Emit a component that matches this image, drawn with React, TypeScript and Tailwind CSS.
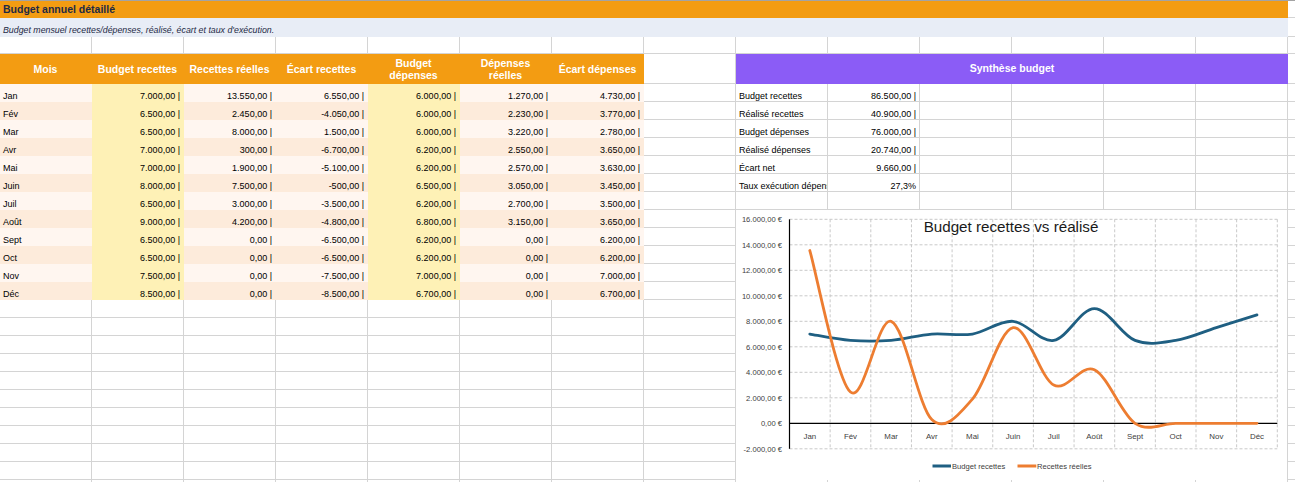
import React from 'react';

type Row = [string, number, number, number, number, number, number];

const rows: Row[] = [
  ['Jan', 7000, 13550, 6550, 6000, 1270, 4730],
  ['Fév', 6500, 2450, -4050, 6000, 2230, 3770],
  ['Mar', 6500, 8000, 1500, 6000, 3220, 2780],
  ['Avr', 7000, 300, -6700, 6200, 2550, 3650],
  ['Mai', 7000, 1900, -5100, 6200, 2570, 3630],
  ['Juin', 8000, 7500, -500, 6500, 3050, 3450],
  ['Juil', 6500, 3000, -3500, 6200, 2700, 3500],
  ['Août', 9000, 4200, -4800, 6800, 3150, 3650],
  ['Sept', 6500, 0, -6500, 6200, 0, 6200],
  ['Oct', 6500, 0, -6500, 6200, 0, 6200],
  ['Nov', 7500, 0, -7500, 7000, 0, 7000],
  ['Déc', 8500, 0, -8500, 6700, 0, 6700],
];

const summary: [string, string][] = [
  ['Budget recettes', '86.500,00 |'],
  ['Réalisé recettes', '40.900,00 |'],
  ['Budget dépenses', '76.000,00 |'],
  ['Réalisé dépenses', '20.740,00 |'],
  ['Écart net', '9.660,00 |'],
  ['Taux exécution dépenses', '27,3%'],
];

function num(n: number) {
  const int = Math.abs(n)
    .toString()
    .replace(/\B(?=(\d{3})+(?!\d))/g, '.');
  return `${n < 0 ? '-' : ''}${int},00`;
}

const line = 'border-[#d4d4d4]';

function Cell({ className = '', children }: { className?: string; children?: React.ReactNode }) {
  return (
    <div className={`w-[92px] shrink-0 h-full border-r border-b flex overflow-hidden whitespace-nowrap ${className}`}>
      {children}
    </div>
  );
}

function EmptyCells({ count }: { count: number }) {
  return (
    <>
      {Array.from({ length: count }).map((_, i) => (
        <Cell key={i} className={line} />
      ))}
    </>
  );
}

function Chart() {
  const L = 53.5;
  const R = 541.3;
  const cw = (R - L) / 12;
  const y = (v: number) => 213.3 - v * 0.01275;
  const cx = (i: number) => L + cw * (i + 0.5);
  const months = rows.map((r) => r[0]);
  const budget = rows.map((r) => r[1]);
  const reel = rows.map((r) => r[2]);

  const smooth = (vals: number[]) => {
    const pts = vals.map((v, i) => [cx(i), y(v)]);
    let d = `M${pts[0][0]},${pts[0][1]}`;
    for (let i = 0; i < pts.length - 1; i++) {
      const p0 = pts[i - 1] || pts[i];
      const p1 = pts[i];
      const p2 = pts[i + 1];
      const p3 = pts[i + 2] || p2;
      const c1x = p1[0] + (p2[0] - p0[0]) / 6;
      const c1y = p1[1] + (p2[1] - p0[1]) / 6;
      const c2x = p2[0] - (p3[0] - p1[0]) / 6;
      const c2y = p2[1] - (p3[1] - p1[1]) / 6;
      d += ` C${c1x},${c1y} ${c2x},${c2y} ${p2[0]},${p2[1]}`;
    }
    return d;
  };

  const ticks = [16000, 14000, 12000, 10000, 8000, 6000, 4000, 2000, 0, -2000];
  const top = y(16000);
  const bottom = y(-2000);

  return (
    <div className="absolute left-[736px] top-[210px] w-[551px] h-[270px] bg-white">
      <svg width="551" height="270" className="block font-['Liberation_Sans',Arial,sans-serif]">
        {ticks
          .filter((t) => t !== 0)
          .map((t) => (
            <line key={t} x1={L} x2={R} y1={y(t)} y2={y(t)} stroke="#c9c9c9" strokeDasharray="3 2" />
          ))}
        {Array.from({ length: 12 }).map((_, k) => (
          <line
            key={k}
            x1={L + cw * (k + 1)}
            x2={L + cw * (k + 1)}
            y1={top}
            y2={bottom}
            stroke="#c9c9c9"
            strokeDasharray="3 2"
          />
        ))}
        <line x1={L} x2={L} y1={top} y2={bottom} stroke="#000" strokeWidth="1.2" />
        <line x1={L} x2={R} y1={y(0)} y2={y(0)} stroke="#000" strokeWidth="1.2" />
        {ticks.map((t) => (
          <text key={t} x={46} y={y(t) + 2.7} textAnchor="end" fontSize="7.6" fill="#404040">
            {`${num(t)} €`}
          </text>
        ))}
        {months.map((m, i) => (
          <text key={m} x={cx(i)} y={228.5} textAnchor="middle" fontSize="7.9" fill="#404040">
            {m}
          </text>
        ))}
        <text x={275} y={22} textAnchor="middle" fontSize="15.2" fill="#1a1a1a">
          Budget recettes vs réalisé
        </text>
        <path d={smooth(budget)} fill="none" stroke="#1f5f82" strokeWidth="2.8" strokeLinecap="round" />
        <path d={smooth(reel)} fill="none" stroke="#ed7d31" strokeWidth="2.8" strokeLinecap="round" />
        <line x1={196.5} x2={215} y1={256} y2={256} stroke="#1f5f82" strokeWidth="3" />
        <text x={216} y={258.7} fontSize="7.6" fill="#404040">
          Budget recettes
        </text>
        <line x1={281.5} x2={300.3} y1={256} y2={256} stroke="#ed7d31" strokeWidth="3" />
        <text x={301} y={258.7} fontSize="7.6" fill="#404040">
          Recettes réelles
        </text>
      </svg>
    </div>
  );
}

export default function App() {
  const headers = ['Mois', 'Budget recettes', 'Recettes réelles', 'Écart recettes', 'Budget dépenses', 'Dépenses réelles', 'Écart dépenses'];
  const twoLine: Record<number, [string, string]> = { 4: ['Budget', 'dépenses'], 5: ['Dépenses', 'réelles'] };

  return (
    <div className="relative w-[1295px] h-[482px] overflow-hidden bg-white text-black font-['Liberation_Sans',Arial,sans-serif] text-[9px]">
      <div className="h-px bg-[#a3a3a3]" />

      <div className="flex h-[17px]">
        <div className="w-[1288px] shrink-0 bg-[#f39c12] flex items-center pl-[3px] text-[10.5px] font-bold text-[#1e2a45]">
          Budget annuel détaillé
        </div>
        <EmptyCells count={1} />
      </div>

      <div className="flex h-[19px]">
        <div className="w-[1288px] shrink-0 bg-[#e8edf6] flex items-end pb-[2px] pl-[3px] italic text-[8.8px] leading-none text-[#1e2a45]">
          Budget mensuel recettes/dépenses, réalisé, écart et taux d'exécution.
        </div>
        <EmptyCells count={1} />
      </div>

      <div className="flex h-[17px]">
        <EmptyCells count={15} />
      </div>

      <div className="flex h-[30px]">
        {headers.map((h, i) => (
          <Cell key={h} className="border-transparent bg-[#f39c12] items-center justify-center text-center text-white font-bold text-[10.5px] leading-[12px]">
            {twoLine[i] ? (
              <span>
                {twoLine[i][0]}
                <br />
                {twoLine[i][1]}
              </span>
            ) : (
              h
            )}
          </Cell>
        ))}
        <Cell className={line} />
        <div className="w-[552px] shrink-0 h-full bg-[#8b5cf6] border-b border-[#8b5cf6] flex items-center justify-center text-white font-bold text-[10.5px]">
          Synthèse budget
        </div>
        <EmptyCells count={1} />
      </div>

      {rows.map((r, i) => {
        const bg = i % 2 === 0 ? 'bg-[#fff6f0]' : 'bg-[#fdebdb]';
        const yellow = 'bg-[#fef1b6] border-transparent';
        const plain = `${bg} border-transparent`;
        const numCell = 'items-end justify-end pr-[3px] leading-none';
        const s = summary[i];
        return (
          <div key={r[0]} className="flex h-[18px]">
            <Cell className={`${plain} items-end pl-[3px] leading-none`}>{r[0]}</Cell>
            <Cell className={`${yellow} ${numCell}`}>{num(r[1])} |</Cell>
            <Cell className={`${plain} ${numCell}`}>{num(r[2])} |</Cell>
            <Cell className={`${plain} ${numCell}`}>{num(r[3])} |</Cell>
            <Cell className={`${yellow} ${numCell}`}>{num(r[4])} |</Cell>
            <Cell className={`${plain} ${numCell}`}>{num(r[5])} |</Cell>
            <Cell className={`${plain} ${numCell}`}>{num(r[6])} |</Cell>
            <Cell className={line} />
            {s ? (
              <>
                <Cell className={`${line} items-end pl-[3px] leading-none`}>{s[0]}</Cell>
                <Cell className={`${line} ${numCell}`}>{s[1]}</Cell>
              </>
            ) : (
              <EmptyCells count={2} />
            )}
            <EmptyCells count={5} />
          </div>
        );
      })}

      {Array.from({ length: 11 }).map((_, i) => (
        <div key={i} className="flex h-[18px]">
          <EmptyCells count={15} />
        </div>
      ))}

      <Chart />
    </div>
  );
}
